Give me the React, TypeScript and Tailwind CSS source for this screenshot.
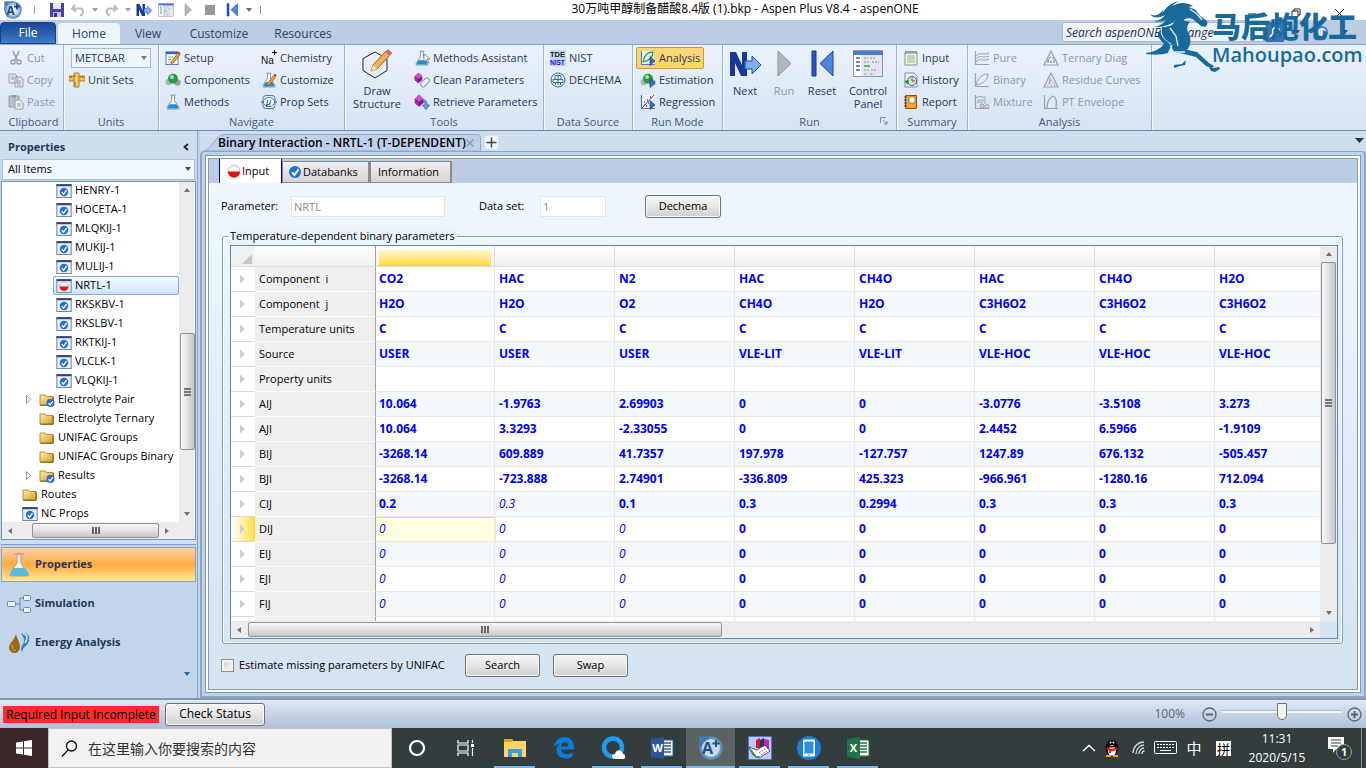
import React from 'react';

interface GridRow {
  label: string;
  cells: string[];
  active?: boolean;
}

// a leading ~ marks a default value, shown in italics
const rows: GridRow[] = [
  { label: 'Component  i', cells: ['CO2', 'HAC', 'N2', 'HAC', 'CH4O', 'HAC', 'CH4O', 'H2O'] },
  { label: 'Component  j', cells: ['H2O', 'H2O', 'O2', 'CH4O', 'H2O', 'C3H6O2', 'C3H6O2', 'C3H6O2'] },
  { label: 'Temperature units', cells: ['C', 'C', 'C', 'C', 'C', 'C', 'C', 'C'] },
  { label: 'Source', cells: ['USER', 'USER', 'USER', 'VLE-LIT', 'VLE-LIT', 'VLE-HOC', 'VLE-HOC', 'VLE-HOC'] },
  { label: 'Property units', cells: ['', '', '', '', '', '', '', ''] },
  { label: 'AIJ', cells: ['10.064', '-1.9763', '2.69903', '0', '0', '-3.0776', '-3.5108', '3.273'] },
  { label: 'AJI', cells: ['10.064', '3.3293', '-2.33055', '0', '0', '2.4452', '6.5966', '-1.9109'] },
  { label: 'BIJ', cells: ['-3268.14', '609.889', '41.7357', '197.978', '-127.757', '1247.89', '676.132', '-505.457'] },
  { label: 'BJI', cells: ['-3268.14', '-723.888', '2.74901', '-336.809', '425.323', '-966.961', '-1280.16', '712.094'] },
  { label: 'CIJ', cells: ['0.2', '~0.3', '0.1', '0.3', '0.2994', '0.3', '0.3', '0.3'] },
  { label: 'DIJ', cells: ['~0', '~0', '~0', '0', '0', '0', '0', '0'], active: true },
  { label: 'EIJ', cells: ['~0', '~0', '~0', '0', '0', '0', '0', '0'] },
  { label: 'EJI', cells: ['~0', '~0', '~0', '0', '0', '0', '0', '0'] },
  { label: 'FIJ', cells: ['~0', '~0', '~0', '0', '0', '0', '0', '0'] },
  { label: '', cells: ['', '', '', '', '', '', '', ''] },
];

interface IconProps {
  size?: number;
  children: React.ReactNode;
}

const Icon: React.FC<IconProps> = ({ size = 16, children }) => (
  <svg width={size} height={size} viewBox="0 0 16 16" className="shrink-0" aria-hidden="true">
    {children}
  </svg>
);

const Play = () => <path d="M10 6.500v9l5-4.500z" fill="#2e6fd0" stroke="#1c3f8c" strokeWidth=".7" />;
const Axes = ({ color = '#5b78b8' }: { color?: string }) => (
  <path d="M1.500 1v13.500H15" fill="none" stroke={color} strokeWidth="1.2" />
);
const Pencil = () => (
  <>
    <path d="M6.500 11.500 13 3l2 1.600-6.500 8.200-2.600 1z" fill="#f6a531" stroke="#8b4b12" strokeWidth=".7" />
    <path d="m12.600 3.200 1.200-1.600 2 1.600-1.200 1.600z" fill="#d8463b" />
  </>
);
const Flask = () => (
  <>
    <path d="M5.500 1.200h5M6.500 1.500v5L2 13.600c-.4.8 0 1.400.8 1.400h10.400c.8 0 1.200-.6.8-1.400L9.500 6.500v-5" fill="#eef6fc" stroke="#7c8ca0" strokeWidth=".9" />
    <path d="M4.600 10.200h6.800l2 3.400c.2.500 0 .9-.5.9H3.100c-.5 0-.7-.4-.5-.9z" fill="#1f8fd6" />
  </>
);
const Spheres = () => (
  <>
    <circle cx="3.800" cy="10" r="3.300" fill="#aeb3b9" />
    <circle cx="12.400" cy="10.500" r="3.300" fill="#9aa1a8" />
    <circle cx="8" cy="6.800" r="5" fill="#2a9a42" />
    <circle cx="7" cy="5" r="2" fill="#a6e6ae" />
  </>
);
const Cube = () => (
  <>
    <path d="M6 1 1 5.500v5l5 4.500 5-4.500v-5z" fill="#8d1487" />
    <path d="M6 1 1 5.500 6 9l5-3.500z" fill="#cf52c8" />
    <path d="M6 9v6l-5-4.500v-5z" fill="#a81fa1" />
  </>
);

const CheckDot = ({ cx = 8, cy = 8, r = 6 }: { cx?: number; cy?: number; r?: number }) => (
  <>
    <circle cx={cx} cy={cy} r={r} fill="#1f6fd6" />
    <path
      d={`M${cx - r * 0.5} ${cy + r * 0.05}l${r * 0.4} ${r * 0.45} ${r * 0.7} ${-r * 0.95}`}
      fill="none"
      stroke="#fff"
      strokeWidth={r * 0.33}
    />
  </>
);
const HalfRed = ({ r = 6 }: { r?: number }) => (
  <>
    <circle cx="8" cy="8.500" r={r} fill="#fff" stroke="#d98080" strokeWidth=".7" />
    <path d={`M${8 - r} 8.500a${r} ${r} 0 0 0 ${2 * r} 0z`} fill="#dd1111" />
  </>
);

const FormIcon = ({ red = false }: { red?: boolean }) => (
  <Icon>
    <rect x=".8" y="1.500" width="14.400" height="13" fill="#e9eefb" stroke="#7184b8" />
    <path d="M.5 2.200h15" stroke="#34457e" strokeWidth="2" />
    {red ? <HalfRed r={4.4} /> : <CheckDot cy={9} r={4.2} />}
  </Icon>
);

const FolderIcon = ({ checked = false }: { checked?: boolean }) => (
  <Icon>
    <defs>
      <linearGradient id="folder" x1="0" y1="0" x2="1" y2="1">
        <stop offset="0" stopColor="#fff0ae" />
        <stop offset="1" stopColor="#d99a1c" />
      </linearGradient>
    </defs>
    <path d="M1 3h5l1.500 1.500H14V13H1z" fill="url(#folder)" stroke="#b08325" strokeWidth=".9" />
    <path d="M14.200 5v8.300H1.500" fill="none" stroke="#6b4c14" strokeWidth=".9" />
    {checked && <CheckDot cx={11.5} cy={11} r={4} />}
  </Icon>
);

const AspenLogo = ({ size = 16 }: { size?: number }) => (
  <Icon size={size}>
    <defs>
      <radialGradient id="aspen">
        <stop offset="0" stopColor="#ffffff" />
        <stop offset=".55" stopColor="#c7d9ec" />
        <stop offset="1" stopColor="#3f7fbd" />
      </radialGradient>
    </defs>
    <path d="M.3.300H8v8H.300z" fill="#3c7cb8" />
    <circle cx="8" cy="8" r="7.800" fill="url(#aspen)" />
    <text x="2.200" y="12" fontSize="10.500" fontWeight="700" fontFamily="Open Sans, sans-serif" fill="#1c4478">A</text>
    <path d="M11.500 2.500v5M9 5h5" stroke="#1c4478" strokeWidth="1.600" />
  </Icon>
);

const NextIcon = ({ size = 16 }: { size?: number }) => (
  <svg width={size} height={size} viewBox="0 0 32 32" className="shrink-0" aria-hidden="true">
    <path d="M1 4h6l6 13V4h5v24h-6L6 15v13H1z" fill="#17389a" />
    <path d="M16 13h7V8l9 9-9 9v-5h-7z" fill="#7fb0ee" stroke="#234fa6" />
  </svg>
);
const RunIcon = ({ size = 16 }: { size?: number }) => (
  <svg width={size} height={size} viewBox="0 0 32 32" className="shrink-0" aria-hidden="true">
    <path d="M10 3v25l13-12.500z" fill="#b3b6ba" stroke="#8d9299" />
  </svg>
);
const ResetIcon = ({ size = 16 }: { size?: number }) => (
  <svg width={size} height={size} viewBox="0 0 32 32" className="shrink-0" aria-hidden="true">
    <path d="M6 3h4v25H6z" fill="#2a56c4" stroke="#17348c" />
    <path d="M27 3v25L14 15.500z" fill="#4b86e0" stroke="#1c459f" />
  </svg>
);
const PanelIcon = ({ size = 16 }: { size?: number }) => (
  <svg width={size} height={size} viewBox="0 0 32 32" className="shrink-0" aria-hidden="true">
    <rect x="1.500" y="2.500" width="29" height="26" fill="#e4e8ee" stroke="#8995a8" />
    <path d="M1 5h30" stroke="#4a7ad0" strokeWidth="4" />
    <path d="M2 7h7v21H2z" fill="#fff" />
    <path d="M4 10h4M4 14h4M4 18h4M4 22h4" stroke="#3658a8" strokeWidth="1.400" />
    <path d="M12 10h4m2 0h5M12 14h6m2 0h7M12 22h5m2 0h5M12 26h4m2 0h4" stroke="#7d8ca8" strokeDasharray="2 1" />
    <path d="M12 18h6" stroke="#3a9a48" strokeWidth="1.400" />
  </svg>
);

const Caret = ({ className = '' }: { className?: string }) => (
  <svg width="6" height="4" viewBox="0 0 6 4" className={className} aria-hidden="true">
    <path d="M0 0h6L3 4z" fill="currentColor" />
  </svg>
);

const Arrow = ({ dir }: { dir: 'up' | 'down' | 'left' | 'right' }) => {
  const d = { up: 'M1 6h6L4 2z', down: 'M1 2h6L4 6z', left: 'M6 1v6L2 4z', right: 'M2 1v6l4-3z' }[dir];
  return (
    <svg width="8" height="8" viewBox="0 0 8 8" aria-hidden="true">
      <path d={d} fill="#707070" />
    </svg>
  );
};

const QuickAccess = () => (
  <div className="flex items-center w-72 shrink-0 pl-1 text-[#6b6b6b]">
    <AspenLogo size={18} />
    <span className="w-px h-2 bg-gray-400 mx-3" />
    <button aria-label="Save" className="ml-[2px]">
      <Icon>
        <path d="M1 1h14v14H1z" fill="#4a3fb0" />
        <path d="M4 1h8v6H4z" fill="#e8e8f4" />
        <path d="M4 10h8v5H4z" fill="#c7c7dc" />
        <path d="M5 11h3v4H5z" fill="#333080" />
      </Icon>
    </button>
    <button aria-label="Undo" className="flex items-center gap-[6px] ml-[5px]">
      <Icon><path d="M5 3 2 6.500l4 3M3 6.500h7c4 0 4 6 0 7" fill="none" stroke="#bbb" strokeWidth="2" /></Icon>
      <Caret className="text-gray-400" />
    </button>
    <button aria-label="Redo" className="flex items-center gap-[6px] ml-[5px]">
      <Icon><path d="m11 3 3 3.500-4 3M13 6.500H7c-5 0-4 6 0 7" fill="none" stroke="#bbb" strokeWidth="2" /></Icon>
      <Caret className="text-gray-400" />
    </button>
    <button aria-label="Next" className="ml-[5px]"><NextIcon /></button>
    <button aria-label="Control Panel" className="ml-[6px]"><PanelIcon /></button>
    <button aria-label="Run" className="ml-[6px]"><RunIcon /></button>
    <button aria-label="Stop" className="ml-[6px]"><Icon><path d="M3 3h10v10H3z" fill="#9a9a9a" /></Icon></button>
    <button aria-label="Reset" className="ml-[6px]"><ResetIcon /></button>
    <Caret className="ml-[6px] shrink-0" />
    <span className="w-px h-2 bg-gray-400 ml-2 shrink-0" />
  </div>
);

interface CommandProps {
  icon: React.ReactNode;
  label: string;
  disabled?: boolean;
  active?: boolean;
}

const Command: React.FC<CommandProps> = ({ icon, label, disabled, active }) => (
  <button
    className={`flex items-center gap-[3px] h-[22px] px-[3px] whitespace-nowrap border rounded-xs ${
      active ? 'border-[#c89a3c] bg-linear-to-b from-[#fbd77e] to-[#ffd65a]' : 'border-transparent'
    } ${disabled ? 'text-[#8c98a8]' : 'text-[#1e395b]'}`}
  >
    {icon}
    {label}
  </button>
);

const BigCommand: React.FC<CommandProps> = ({ icon, label, disabled }) => (
  <button className={`flex flex-col items-center pt-px leading-[13px] ${disabled ? 'text-[#8c98a8]' : 'text-[#1e395b]'}`}>
    {icon}
    <span className="pt-1">{label}</span>
  </button>
);

interface GroupProps {
  title: string;
  className: string;
  launcher?: boolean;
  children: React.ReactNode;
}

const Group: React.FC<GroupProps> = ({ title, className, launcher, children }) => (
  <section className={`flex flex-col shrink-0 border-r border-[#9fb6d3] shadow-[1px_0_0_#f5f9fe] ${className}`}>
    <div className="flex h-[68px] pt-[2px]">{children}</div>
    <h2 className="relative text-center leading-[17px] text-[#3e5a80]">
      {title}
      {launcher && (
        <svg className="absolute right-2 top-1" width="8" height="8" viewBox="0 0 8 8" aria-hidden="true">
          <path d="M.5 6V.500H6M3 3l4 4M7 4v3H4" fill="none" stroke="#7a8ca8" />
        </svg>
      )}
    </h2>
  </section>
);

const gray = '#9aa0a8';

const Ribbon = () => (
  <div className="flex h-[87px] shrink-0 overflow-hidden border-t border-b border-t-[#8ba4c8] border-b-[#6b8ab2] bg-linear-to-b from-[#eaf2fb] to-[#d7e4f2]">
    <Group title="Clipboard" className="w-16 pl-1">
      <div>
        <Command disabled label="Cut" icon={<Icon><path d="m5 1 4 9M11 1 7 10" stroke={gray} strokeWidth="1.600" /><circle cx="5" cy="12" r="2" fill="none" stroke={gray} strokeWidth="1.500" /><circle cx="11" cy="12" r="2" fill="none" stroke={gray} strokeWidth="1.500" /></Icon>} />
        <Command disabled label="Copy" icon={<Icon><path d="M1 2h6l2 2v7H1zM7 5h6l2 2v8H7z" fill="#e2e6eb" stroke={gray} /><path d="M3 5h3M3 7h3m3 2h4m-4 2h4m-4 2h4" stroke={gray} /></Icon>} />
        <Command disabled label="Paste" icon={<Icon><path d="M1 2h10v11H1z" fill="#bcc1c7" stroke={gray} /><path d="M4 1h4v3H4z" fill={gray} /><path d="M7 6h5l3 3v6H7z" fill="#eceff2" stroke={gray} /><path d="M9 10h4m-4 2h4" stroke={gray} /></Icon>} />
      </div>
    </Group>
    <Group title="Units" className="w-[95px]">
      <div className="pl-px">
        <div className="relative ml-[6px] mt-px mb-px">
          <select aria-label="Unit set" className="appearance-none block w-20 h-5 pl-[3px] border border-[#a3bbdb] bg-[#edf4fc] text-[#1e395b]">
            <option>METCBAR</option>
          </select>
          <Caret className="absolute right-1 top-2 text-[#777] pointer-events-none" />
        </div>
        <Command label="Unit Sets" icon={<Icon><path d="M0 4h16v5H0z" fill="#f3c34d" stroke="#9a6b14" strokeWidth=".8" /><path d="M5 1h5v14H5z" fill="#f7cf63" stroke="#9a6b14" strokeWidth=".8" /><path d="M2 4v2m10-2v2m2-2v2M5 11h2m-2-7h2m-2 9h2" stroke="#7d5410" strokeWidth=".8" /></Icon>} />
      </div>
    </Group>
    <Group title="Navigate" className="w-[186px]">
      <div className="w-24 pl-[2px]">
        <Command label="Setup" icon={<Icon><rect x="1" y="2" width="12" height="12.500" fill="#fff" stroke="#5b7cae" /><path d="M1 3h12" stroke="#3b66b0" strokeWidth="2.500" /><path d="M3 7h5M3 9.500h3" stroke="#9ab" /><Pencil /></Icon>} />
        <Command label="Components" icon={<Icon><Spheres /></Icon>} />
        <Command label="Methods" icon={<Icon><Flask /></Icon>} />
      </div>
      <div className="pl-[2px]">
        <Command label="Chemistry" icon={<Icon><text x="0" y="14" fontSize="10" fontFamily="Liberation Sans, sans-serif" fill="#111">Na</text><path d="M13.500 0v5M11 2.500h5" stroke="#111" /></Icon>} />
        <Command label="Customize" icon={<Icon><Flask /><Pencil /></Icon>} />
        <Command label="Prop Sets" icon={<Icon><rect x="2" y="1.500" width="12" height="13" rx="3" fill="#e3efff" stroke="#4a76c0" /><path d="M0 8h3m10 0h3" stroke="#4a76c0" strokeWidth="1.500" /><ellipse cx="8" cy="8" rx="5.500" ry="4.500" fill="#fff" stroke="#4a76c0" /><text x="5" y="11" fontSize="9" fontStyle="italic" fontFamily="Open Sans, sans-serif" fill="#111">μ</text></Icon>} />
      </div>
    </Group>
    <Group title="Tools" className="w-[199px]">
      <div className="w-16 flex justify-center">
        <BigCommand label="Draw Structure" icon={
          <svg width="32" height="32" viewBox="0 0 32 32" aria-hidden="true">
            <path d="m14 4 12 6.500v12L14 30 2 22.500v-12z" fill="none" stroke="#222" />
            <path d="m10 23 2-6L25 3l4 4-13 14z" fill="#f3b05a" stroke="#a5621d" />
            <path d="m24 4 3-3 4.500 4-3 3z" fill="#d46a6a" />
            <path d="m10 23 2-6 4 4z" fill="#fbe3c0" />
          </svg>
        } />
      </div>
      <div className="pl-px">
        <Command label="Methods Assistant" icon={<Icon><Flask /><path d="M10 4v8l2-2 2 3 1-1-2-3h3z" fill="#fff" stroke="#666" strokeWidth=".7" /></Icon>} />
        <Command label="Clean Parameters" icon={<Icon><g transform="scale(.75)"><Cube /></g><rect x="6" y="8" width="10" height="5" rx="2.500" transform="rotate(-45 11 10.500)" fill="#eef1f7" stroke="#8791a8" /></Icon>} />
        <Command label="Retrieve Parameters" icon={<Icon><g transform="scale(.85)"><Cube /></g><path d="M9 6c4 0 4 2 4 5h2.500L12 15.500 8.500 11H11c0-2 0-3-2-3z" fill="#6fa0ea" stroke="#2450a8" strokeWidth=".7" /></Icon>} />
      </div>
    </Group>
    <Group title="Data Source" className="w-[89px]">
      <div className="pl-[2px]">
        <Command label="NIST" icon={<Icon><path d="M0 0h16v16H0z" fill="#c5d6f2" /><text x="0" y="7" fontSize="7.500" fontWeight="700" fontFamily="Liberation Sans, sans-serif" fill="#222">TDE</text><text x="0" y="15" fontSize="6.500" fontWeight="700" fontFamily="Liberation Sans, sans-serif" fill="#1414d8">NIST</text></Icon>} />
        <Command label="DECHEMA" icon={<Icon><circle cx="8" cy="8" r="7" fill="#e6f1f8" stroke="#356f96" /><path d="M5 3.500h6v4H5zM3 7.500h10v3H3zM8 3v10M5.500 10.500v2.500m5-2.500v2.500" fill="none" stroke="#356f96" /></Icon>} />
      </div>
    </Group>
    <Group title="Run Mode" className="w-[90px]">
      <div className="pl-[3px]">
        <Command active label="Analysis" icon={<Icon><path d="M1 1h13v14H1z" fill="#f4f7ff" /><Axes /><path d="M3 12C5 4 8 2 13 2c0 5-4 9-10 10" fill="none" stroke="#30a848" strokeWidth="1.400" /><Play /></Icon>} />
        <Command label="Estimation" icon={<Icon><Spheres /><Play /></Icon>} />
        <Command label="Regression" icon={<Icon><path d="M1 1h13v14H1z" fill="#f4f7ff" /><Axes /><path d="M2 14 14 1" stroke="#2244aa" /><path d="M4 8h1m2-2h1m2-3h1M6 12h1m1-3h1" stroke="#d02020" strokeWidth="1.500" /><Play /></Icon>} />
      </div>
    </Group>
    <Group title="Run" className="w-[174px]" launcher>
      <div className="grid grid-cols-[44px_34px_42px_50px] w-full">
        <BigCommand label="Next" icon={<NextIcon size={32} />} />
        <BigCommand disabled label="Run" icon={<RunIcon size={32} />} />
        <BigCommand label="Reset" icon={<ResetIcon size={32} />} />
        <BigCommand label="Control Panel" icon={<PanelIcon size={32} />} />
      </div>
    </Group>
    <Group title="Summary" className="w-[71px]">
      <div className="pl-[2px]">
        <Command label="Input" icon={<Icon><path d="M2 2h12v13H2z" fill="#eef3e8" stroke="#8a9488" /><path d="M3 1v3m2-3v3m2-3v3m2-3v3m2-3v3m2-3v3" stroke="#666" strokeWidth=".8" /><path d="M4 6h8M4 8h8m-8 2h8m-8 2h8" stroke="#8fb88a" /></Icon>} />
        <Command label="History" icon={<Icon><path d="M2 1h9l3 3v11H2z" fill="#f1f5fb" stroke="#7a8ba8" /><circle cx="9" cy="9" r="4.500" fill="#d7e7d7" stroke="#657" /><path d="M9 6v3h3" fill="none" stroke="#c02020" /><path d="m1 9 5-1-1 5z" fill="#1f9a38" /></Icon>} />
        <Command label="Report" icon={<Icon><path d="M2.500 1.500h11v13h-11z" fill="#f0a53c" stroke="#8a5415" /><path d="M6 3h6v6H6z" fill="#fff8e0" stroke="#8a5415" strokeWidth=".7" /><path d="M1 3h3M1 6h3M1 9h3m-3 3h3" stroke="#444" /></Icon>} />
      </div>
    </Group>
    <Group title="Analysis" className="w-[184px]">
      <div className="w-[71px] pl-[2px]">
        <Command disabled label="Pure" icon={<Icon><Axes color={gray} /><path d="M2 6c4-5 7 0 13-3M2 9c4-5 7 0 13-3M2 12c4-5 7 0 13-3" fill="none" stroke={gray} /></Icon>} />
        <Command disabled label="Binary" icon={<Icon><Axes color={gray} /><path d="M2 13C4 6 8 2 14 2c0 6-5 10-12 11" fill="none" stroke={gray} /></Icon>} />
        <Command disabled label="Mixture" icon={<Icon><Axes color={gray} /><path d="M2 4c4-3 6 0 9-1v7M3 7c3-2 5 0 7-1M3 9c3-2 5 0 6-1" fill="none" stroke={gray} /><circle cx="8" cy="12" r="2" fill="#ddd" stroke={gray} /><circle cx="13" cy="12.500" r="2" fill="#ddd" stroke={gray} /></Icon>} />
      </div>
      <div>
        <Command disabled label="Ternary Diag" icon={<Icon><path d="m8 1 7 14H1z" fill="none" stroke={gray} strokeWidth="1.200" /><path d="M5 11c0-5 6-5 6 0M4 12h8" fill="none" stroke="#777" strokeDasharray="2 1" /></Icon>} />
        <Command disabled label="Residue Curves" icon={<Icon><path d="m8 1 7 14H1z" fill="none" stroke={gray} strokeWidth="1.200" /><path d="M8 5c-2 4 3 4 4 9M7 7c-1 4 0 5 2 7M4 13c2-1 3-3 3-5" fill="none" stroke={gray} /></Icon>} />
        <Command disabled label="PT Envelope" icon={<Icon><Axes color={gray} /><path d="M4 14c0-6 2-10 6-12 3 1 4 5 3 12" fill="none" stroke={gray} strokeWidth="1.300" /></Icon>} />
      </div>
    </Group>
  </div>
);

const Watermark = () => (
  <div className="absolute right-0 top-0 flex w-[220px] text-[#186a9b] pointer-events-none">
    <svg width="80" height="73" viewBox="0 0 80 73" fill="currentColor" className="shrink-0 -mr-[14px]" aria-hidden="true">
      <path d="M4 14c5 3 9 1 13-4 0 2-1 4-2 5C19 9 24 2 34 1c-4 1-6 3-8 5 7-4 15-4 21 0l-5 1c6 1 10 4 12 9l7 5c1 2 0 5-2 6l-4-1-7-6c-3-2-6-2-9-1-4 4-9 7-16 8 3-2 5-4 6-6-5 4-12 6-20 6 6-2 9-4 11-7-4 2-8 2-12 1 5 0 9-3 11-6-5 3-12 4-15-1z" />
      <path d="M16 27c7 0 14-2 20-7l8 2c-4 4-3 8-1 13 3 6 1 11-2 15l-12-4-9-6c-4-4-5-8-4-13z" />
      <path d="M15 29c-1 5 1 9 8 14l2 5-3 5c-7 2-14 2-22 1v-1c8-1 14-4 18-9l-5-6c-2-3-1-6 2-9z" />
      <path d="m24 44 9 1 9 5 9 2 12 11 5 3-2 2-6-2-10-9-12-3-10-2zM28 65l8-1 4-4-1 5-5 1-6 2zM62 65l5 3 6-1 1 2-5 3-4-1z" />
      <path d="m24 28 6 8 2 10m-6-1-3 7 16 0M44 9l7 5 5 6m-5-8 2 1" fill="none" stroke="#dfeaf6" strokeWidth="1.300" />
    </svg>
    <div className="pt-[7px] whitespace-nowrap">
      <div className="font-['Noto_Sans_CJK_SC',sans-serif] font-black text-[29px] leading-[36px]">马后炮化工</div>
      <div className="font-['Open_Sans',sans-serif] font-semibold text-[20px] leading-[24px]">Mahoupao.com</div>
    </div>
  </div>
);

const Header = () => (
  <header className="relative shrink-0">
    <div className="flex h-5 bg-white">
      <QuickAccess />
      <h1 className="flex-1 text-center text-black text-xs leading-[18px] pr-[164px]">
        30万吨甲醇制备醋酸8.4版 (1).bkp - Aspen Plus V8.4 - aspenONE
      </h1>
    </div>
    <nav className="flex items-end h-6 bg-[#bbcce4] text-xs text-[#2b4568]">
      <button className="w-14 h-[22px] mr-[2px] rounded-t-sm border border-[#1d4283] bg-linear-to-b from-[#1c4a96] via-[#2a5fae] to-[#3f7cc9] text-white">File</button>
      <button className="w-[62px] h-[21px] rounded-t-sm bg-[#eff5fc]">Home</button>
      <button className="w-14 h-[21px]">View</button>
      <button className="w-[86px] h-[21px]">Customize</button>
      <button className="w-[82px] h-[21px]">Resources</button>
      <div className="flex items-center ml-auto self-start pt-[2px] pr-3">
        <input aria-label="Search" defaultValue="Search aspenONE Exchange" className="w-[204px] h-5 px-[3px] border border-[#a8b8cc] bg-[#eff5fc] text-xs italic text-[#1e2f55]" />
        <button aria-label="Go" className="w-[18px] h-5 bg-[#3c72b8] flex items-center justify-center">
          <svg width="12" height="12" viewBox="0 0 12 12" aria-hidden="true"><circle cx="7" cy="5" r="3.500" fill="none" stroke="#fff" strokeWidth="1.500" /><path d="M4 8 1 11" stroke="#fff" strokeWidth="2" /></svg>
        </button>
        <Caret className="ml-[10px] mr-4 text-[#445]" />
        <button aria-label="Help" className="w-3 h-3 mr-[14px] rounded-full border-2 border-[#4a7fd0] bg-[#d8e6f8]" />
        <button aria-label="Collapse" className="w-3"><Caret className="text-[#445]" /></button>
      </div>
    </nav>
    <Ribbon />
    <svg className="absolute right-4 top-2" width="104" height="12" viewBox="0 0 104 12" aria-hidden="true">
      <path d="M2 6h8M46 3h6v6h-6zM48 3V1h6v6h-2M89 1l9 9M98 1l-9 9" fill="none" stroke="#222" />
    </svg>
    <Watermark />
  </header>
);

interface TreeItemProps {
  label: string;
  icon: React.ReactNode;
  indent: string;
  expander?: boolean;
  selected?: boolean;
}

const TreeItem: React.FC<TreeItemProps> = ({ label, icon, indent, expander, selected }) => (
  <li className={`flex ${indent}`}>
    {expander && (
      <svg width="16" height="19" viewBox="0 0 16 19" aria-hidden="true">
        <path d="M6.500 5.500v8l4-4z" fill="#fff" stroke="#999" />
      </svg>
    )}
    <button
      className={`flex flex-1 items-center gap-[3px] h-[19px] pl-[2px] border rounded-xs whitespace-nowrap ${
        selected ? 'border-[#84acdd] bg-linear-to-b from-[#f2f8ff] to-[#cfe3fb]' : 'border-transparent'
      }`}
    >
      {icon}
      {label}
    </button>
  </li>
);

const forms = ['HENRY-1', 'HOCETA-1', 'MLQKIJ-1', 'MUKIJ-1', 'MULIJ-1', 'NRTL-1', 'RKSKBV-1', 'RKSLBV-1', 'RKTKIJ-1', 'VLCLK-1', 'VLQKIJ-1'];

const thumbV = 'flex flex-col items-center justify-center gap-px rounded-xs border border-[#8f9399] bg-linear-to-r from-[#f7f7f7] via-[#e2e2e4] to-[#c4c5c8]';
const thumbH = 'flex items-center justify-center gap-px rounded-xs border border-[#8f9399] bg-linear-to-b from-[#f7f7f7] via-[#e2e2e4] to-[#c4c5c8]';

const GripV = () => (
  <>
    <span className="w-[7px] h-[2px] bg-[#777]" />
    <span className="w-[7px] h-[2px] bg-[#777]" />
    <span className="w-[7px] h-[2px] bg-[#777]" />
  </>
);
const GripH = () => (
  <>
    <span className="w-[2px] h-[7px] bg-[#666]" />
    <span className="w-[2px] h-[7px] bg-[#666]" />
    <span className="w-[2px] h-[7px] bg-[#666]" />
  </>
);

const Sidebar = () => (
  <aside className="flex flex-col w-[198px] shrink-0 px-px border-r border-[#8fa5c2] bg-[#c2d5ea]">
    <div className="flex items-center justify-between h-7 pl-2 pr-2 pt-1 -mx-px bg-[#d0ddee]">
      <h2 className="font-bold text-[#1e395b]">Properties</h2>
      <svg width="6" height="8" viewBox="0 0 6 8" aria-hidden="true"><path d="M5 1 1.500 4 5 7" fill="none" stroke="#222" strokeWidth="1.800" /></svg>
    </div>
    <div className="relative mx-px mb-px">
      <select aria-label="Filter" className="appearance-none block w-full h-[21px] pl-[5px] border border-[#a9c4e2] bg-[#f1f7fe]">
        <option>All Items</option>
      </select>
      <Caret className="absolute right-1 top-2 text-[#445] pointer-events-none" />
    </div>
    <div className="flex flex-col flex-1 min-h-0 border border-[#7e96b4] bg-white">
      <div className="flex flex-1 min-h-0">
        <ul className="flex-1 min-w-0 overflow-hidden -mt-px">
          {forms.map((name) => (
            <TreeItem key={name} label={name} indent="pl-[51px]" icon={<FormIcon red={name === 'NRTL-1'} />} selected={name === 'NRTL-1'} />
          ))}
          <TreeItem label="Electrolyte Pair" indent="pl-[18px]" expander icon={<FolderIcon checked />} />
          <TreeItem label="Electrolyte Ternary" indent="pl-[34px]" icon={<FolderIcon />} />
          <TreeItem label="UNIFAC Groups" indent="pl-[34px]" icon={<FolderIcon />} />
          <TreeItem label="UNIFAC Groups Binary" indent="pl-[34px]" icon={<FolderIcon />} />
          <TreeItem label="Results" indent="pl-[18px]" expander icon={<FolderIcon checked />} />
          <TreeItem label="Routes" indent="pl-[17px]" icon={<FolderIcon />} />
          <TreeItem label="NC Props" indent="pl-[17px]" icon={<FormIcon />} />
        </ul>
        <div className="flex flex-col items-center w-4 py-1 bg-[#ececec]">
          <Arrow dir="up" />
          <div className={`w-[15px] h-[117px] mt-auto ${thumbV}`}><GripV /></div>
          <div className="h-[60px] shrink-0" />
          <Arrow dir="down" />
        </div>
      </div>
      <div className="flex items-center h-[17px] shrink-0 pl-1 pr-6 bg-[#ececec]">
        <Arrow dir="left" />
        <div className={`w-[129px] h-[15px] ml-[18px] mr-1 ${thumbH}`}><GripH /></div>
        <Arrow dir="right" />
      </div>
    </div>
    <div className="h-[5px] shrink-0 border-b border-[#7e9cc4] bg-[#cfdff2]" />
    <nav className="flex flex-col gap-1 h-[153px] pt-[2px] shrink-0 font-bold text-[#1e395b]">
      <button className="flex items-center gap-1 h-[35px] pl-[3px] border border-[#8ba3c2] bg-linear-to-b from-[#fdd0a0] via-[#ffab3f] via-50% to-[#fee794]">
        <svg width="26" height="26" viewBox="0 0 26 26" aria-hidden="true">
          <path d="M9 2h10M12 2v9L5 22c-1 2 0 2 1 2h15c2 0 2-1 1-2l-6-11V2z" fill="#f6efe4" stroke="#a88" strokeWidth=".7" />
          <path d="M8 16h12l4 6c0 2-1 2-2 2H6c-2 0-2-1-1-2z" fill="#56bfe0" />
        </svg>
        Properties
      </button>
      <button className="flex items-center gap-1 h-[35px] pl-1">
        <svg width="26" height="20" viewBox="0 0 26 20" fill="#eff5fd" stroke="#6786b8" aria-hidden="true">
          <path d="M10 10h5M18 4h-3v12h3" fill="none" />
          <rect x="2.500" y="7.500" width="8" height="5" rx="1" /><rect x="18.500" y="1.500" width="7" height="5" rx="1" /><rect x="18.500" y="13.500" width="7" height="5" rx="1" />
        </svg>
        Simulation
      </button>
      <button className="flex items-center gap-1 h-[35px] pl-1">
        <svg width="26" height="22" viewBox="0 0 26 22" aria-hidden="true">
          <path d="M11 2c1 5 4 8 4 13 0 4-3 6-5.500 6S4 19 4 15.500 9 8 11 2z" fill="#9a6a1c" />
          <path d="M7 13c0 3 1 5 4 6" stroke="#d7a85a" fill="none" />
          <path d="M16 2c8-3 10 4 7 9-2 4-5 4-6 9-3-5 2-7 2-11 0-3-1-5-3-7z" fill="#3a7fc0" />
          <path d="M18 2c5 0 5 4 2 9" stroke="#d5e8fa" fill="none" strokeWidth="1.500" />
        </svg>
        Energy Analysis
      </button>
      <Caret className="ml-auto mr-[6px] mt-2 text-[#2f5fa8]" />
    </nav>
  </aside>
);

const PushButton = ({ className, children }: { className: string; children: React.ReactNode }) => (
  <button className={`h-[23px] rounded-[3px] border border-[#707070] bg-linear-to-b from-[#f4f4f4] via-[#e6e6e6] to-[#cfcfcf] shadow-[inset_0_0_0_1px_#fafafa] ${className}`}>
    {children}
  </button>
);

const ParameterTable = () => (
  <table className="table-fixed w-[1104px] border-separate border-spacing-0">
    <colgroup>
      <col className="w-6" />
      <col className="w-[121px]" />
      {rows[0].cells.map((_, i) => <col key={i} className={i === 0 ? 'w-[119px]' : 'w-[120px]'} />)}
    </colgroup>
    <thead>
      <tr className="h-[21px]">
        <th className="p-0 bg-[#f0f0f0] border-b border-[#dcdcdc]">
          <svg width="24" height="20" viewBox="0 0 24 20" aria-hidden="true"><path d="M21 8v10H11z" fill="#c6c6c6" /></svg>
        </th>
        <th className="p-0 border-b border-r border-b-[#dcdcdc] border-r-[#a0a0a0] bg-linear-to-b from-white to-[#f0f0f0]" />
        {rows[0].cells.map((_, i) => (
          <th key={i} className="p-0 border-b border-r border-[#dcdcdc] bg-linear-to-b from-white to-[#f0f0f0]">
            {i === 0 && <div className="h-4 mx-[3px] mt-[3px] bg-linear-to-b from-[#fff6cc] to-[#ffd91a]" />}
          </th>
        ))}
      </tr>
    </thead>
    <tbody>
      {rows.map((row, r) => (
        <tr key={r} className={`h-[25px] ${r % 2 ? 'bg-[#f3f8fd]' : 'bg-white'}`}>
          <td className={`p-0 border-b border-[#dadada] ${row.active ? 'bg-linear-to-r from-white to-[#ffdd1c]' : 'bg-white'}`}>
            <svg width="24" height="12" viewBox="0 0 24 12" aria-hidden="true"><path d="M9 1.500v9l5-4.500z" fill="#cfcfcf" /></svg>
          </td>
          <th scope="row" className="p-0 pl-1 text-left font-normal whitespace-pre border-b border-r border-b-[#fafafa] border-r-[#a0a0a0] bg-[#efefef]">
            {row.label}
          </th>
          {row.cells.map((cell, i) => {
            const italic = cell.startsWith('~');
            return (
              <td
                key={i}
                className={`p-0 border-b border-r border-[#e6e9ec] text-xs text-[#0000f5] ${i === 0 ? 'pl-[3px]' : 'pl-1'} ${italic ? 'italic' : 'font-bold'} ${
                  row.active && i === 0 ? 'bg-[#ffffe0] shadow-[inset_0_1px_0_#f5dc60,1px_0_0_#f9eb9a]' : ''
                }`}
              >
                {cell.replace('~', '')}
              </td>
            );
          })}
        </tr>
      ))}
    </tbody>
  </table>
);

const Editor = () => (
  <main className="flex flex-col flex-1 min-w-0 ml-[2px] bg-[#d0ddee]">
    <div className="flex items-end h-5 shrink-0 pl-1">
      <div className="relative h-[17px] w-[277px] shrink-0">
        <svg className="absolute inset-0" width="277" height="17" viewBox="0 0 277 17" aria-hidden="true">
          <path d="M0 17C8 15 12 .500 20 .500h254q2.500 0 2.500 2.500v14z" fill="#bfd0e8" stroke="#94a9c6" />
        </svg>
        <div className="relative flex items-center justify-between pl-[14px] pr-2 text-xs leading-[17px] font-semibold text-black whitespace-nowrap">
          Binary Interaction - NRTL-1 (T-DEPENDENT)
          <button aria-label="Close tab">
            <svg width="8" height="8" viewBox="0 0 8 8" aria-hidden="true"><path d="m.500.500 7 7m0-7-7 7" stroke="#8b98ac" strokeWidth="1.400" /></svg>
          </button>
        </div>
      </div>
      <button aria-label="New tab" className="flex items-center justify-center w-[13px] h-[13px] ml-1 mb-[2px] rounded-xs bg-[#f1f5fa]">
        <svg width="11" height="11" viewBox="0 0 11 11" aria-hidden="true"><path d="M5.500.500v10m-5-5h10" stroke="#444" strokeWidth="1.500" /></svg>
      </button>
      <button aria-label="Open tabs" className="ml-auto mb-2 mr-[2px]">
        <svg width="9" height="5" viewBox="0 0 9 5" aria-hidden="true"><path d="M0 0h9L4.500 5z" fill="#1e395b" /></svg>
      </button>
    </div>
    <div className="flex flex-col flex-1 min-h-0 p-[3px] border-2 border-t border-[#8fa5c2] rounded-t-sm bg-[#bcd3ec]">
      <div className="flex flex-col flex-1 min-h-0 p-[2px] border border-[#8a97a8] bg-white">
        <div className="flex flex-col flex-1 min-h-0 border border-[#8a97a8] bg-linear-to-b from-[#f1f8ff] to-[#d5e2f0]">
          <div className="flex items-end h-6 shrink-0 pl-[10px] bg-[#bbcce4]">
            <button className="flex items-center w-[63px] h-6 pl-[6px] border-x border-[#000080] bg-white"><Icon><HalfRed /></Icon>Input</button>
            <button className="flex items-center w-[88px] h-[22px] pl-1 border border-r-2 border-[#8a8a8a] bg-linear-to-b from-[#f0f0f0] to-[#d4d4d4]"><Icon><CheckDot /></Icon>Databanks</button>
            <button className="w-[82px] h-[22px] pr-1 border border-r-2 border-[#8a8a8a] bg-linear-to-b from-[#f0f0f0] to-[#d4d4d4]">Information</button>
          </div>
          <div className="flex items-center h-[23px] shrink-0 mt-3 pl-3">
            <label htmlFor="parameter" className="w-[70px]">Parameter:</label>
            <input id="parameter" disabled defaultValue="NRTL" className="w-[154px] h-[21px] px-[2px] border border-[#e2e4e8] bg-white text-[#8a8a8a]" />
            <label htmlFor="dataset" className="w-[61px] ml-[34px]">Data set:</label>
            <input id="dataset" disabled defaultValue="1" className="w-[66px] h-[21px] px-[2px] border border-[#e2e4e8] bg-white text-[#8a8a8a]" />
            <PushButton className="w-[76px] ml-[39px]">Dechema</PushButton>
          </div>
          <fieldset className="flex flex-col flex-1 min-h-0 min-w-0 mt-[10px] ml-[13px] mr-[14px] pl-[7px] pr-1 pb-1 pt-px border border-[#7ba0c4] rounded-[3px] shadow-[inset_0_0_0_1px_#fff]">
            <legend className="-ml-[2px] px-[2px] leading-4 bg-[#ebf4fc]">Temperature-dependent binary parameters</legend>
            <div className="flex flex-col flex-1 h-full min-h-0 border border-[#5c8ab4]">
              <div className="flex flex-1 min-h-0">
                <div className="flex-1 min-w-0 overflow-hidden bg-white">
                  <ParameterTable />
                </div>
                <div className="flex flex-col items-center w-[17px] shrink-0 py-1 bg-[#ececec]">
                  <Arrow dir="up" />
                  <div className={`w-[15px] h-[282px] mt-1 mb-auto ${thumbV}`}><GripV /></div>
                  <Arrow dir="down" />
                </div>
              </div>
              <div className="flex items-center h-[17px] shrink-0 mr-[17px] px-1 bg-[#ececec]">
                <Arrow dir="left" />
                <div className={`w-[474px] h-[15px] ml-[5px] mr-auto ${thumbH}`}><GripH /></div>
                <Arrow dir="right" />
              </div>
            </div>
          </fieldset>
          <div className="flex items-center shrink-0 mt-[10px] mb-3 pl-3">
            <label className="flex items-center gap-[5px] w-[244px]">
              <input type="checkbox" className="appearance-none w-[13px] h-[13px] border border-[#8e8f8f] bg-linear-to-br from-[#c8ccd0] to-white shadow-[inset_0_0_0_2px_#f4f4f4]" />
              Estimate missing parameters by UNIFAC
            </label>
            <PushButton className="w-[75px]">Search</PushButton>
            <PushButton className="w-[75px] ml-[13px]">Swap</PushButton>
          </div>
        </div>
      </div>
    </div>
  </main>
);

const ZoomSign = ({ plus = false }: { plus?: boolean }) => (
  <svg width="15" height="15" viewBox="0 0 15 15" fill="none" stroke="#5a6676" aria-hidden="true">
    <circle cx="7.500" cy="7.500" r="6.500" strokeWidth="1.300" />
    <path d={plus ? 'M4 7.500h7M7.500 4v7' : 'M4 7.500h7'} strokeWidth="2" />
  </svg>
);

const StatusBar = () => (
  <footer className="flex items-center h-[30px] shrink-0 pl-[3px] pr-1 border-t-2 border-[#8496b4] bg-linear-to-b from-[#dfe9f5] to-[#aec0d8] text-xs">
    <span className="w-[156px] text-center leading-[17px] bg-[#ff2a2a] whitespace-nowrap">Required Input Incomplete</span>
    <PushButton className="w-[100px] ml-[6px]">Check Status</PushButton>
    <span className="ml-auto text-[#5a6676]">100%</span>
    <button aria-label="Zoom out" className="ml-[17px]"><ZoomSign /></button>
    <input
      type="range"
      aria-label="Zoom"
      defaultValue={50}
      className="appearance-none w-[120px] h-[18px] mx-[5px] mb-[6px] bg-transparent [&::-webkit-slider-runnable-track]:h-[3px] [&::-webkit-slider-runnable-track]:bg-[#f0f2f5] [&::-webkit-slider-runnable-track]:border-t [&::-webkit-slider-runnable-track]:border-[#b4bcc8] [&::-webkit-slider-thumb]:appearance-none [&::-webkit-slider-thumb]:w-[10px] [&::-webkit-slider-thumb]:h-[17px] [&::-webkit-slider-thumb]:-mt-2 [&::-webkit-slider-thumb]:border [&::-webkit-slider-thumb]:border-[#777] [&::-webkit-slider-thumb]:rounded-b-[5px] [&::-webkit-slider-thumb]:bg-[#f2f2f2]"
    />
    <button aria-label="Zoom in"><ZoomSign plus /></button>
  </footer>
);

interface TaskProps {
  name: string;
  open?: boolean;
  active?: boolean;
  children: React.ReactNode;
}

const Task: React.FC<TaskProps> = ({ name, open, active, children }) => (
  <button aria-label={name} className={`relative flex items-center justify-center w-[49px] h-10 ${active ? 'bg-[#5b6463]' : ''}`}>
    <svg width="24" height="24" viewBox="0 0 24 24" aria-hidden="true">{children}</svg>
    {open && <span className={`absolute bottom-0 h-[2px] bg-[#76b9ed] ${active ? 'inset-x-0' : 'inset-x-1'}`} />}
  </button>
);

const Office = ({ letter, color }: { letter: string; color: string }) => (
  <>
    <path d="M12 4h11v16H12z" fill="#fff" stroke={color} />
    <path d="M14 7h7m-7 3h7m-7 3h7m-7 3h7" stroke={color} strokeWidth="1.500" />
    <path d="m1 3 13-2v22L1 21z" fill={color} />
    <text x="7.500" y="16" textAnchor="middle" fontSize="11" fontWeight="700" fontFamily="Open Sans, sans-serif" fill="#fff">{letter}</text>
  </>
);

const Taskbar = () => (
  <div className="flex h-10 shrink-0 bg-[#343d3e] text-white">
    <button aria-label="Start" className="flex items-center justify-center w-12 bg-[#3d2628]">
      <svg width="16" height="16" viewBox="0 0 16 16" fill="#fff" aria-hidden="true"><path d="M0 2.500 7 1.500v6H0zM8 1.300 16 0v7.500H8zM0 8.500h7v6l-7-1zM8 8.500h8V16l-8-1.300z" /></svg>
    </button>
    <label className="flex items-center gap-[10px] w-[344px] pl-3 border border-[#c4c4c4] bg-[#f1f1f1]">
      <svg width="17" height="17" viewBox="0 0 17 17" fill="none" stroke="#111" strokeWidth="1.300" aria-hidden="true"><circle cx="10.500" cy="6" r="5" /><path d="m7 10-6 6.500" /></svg>
      <input aria-label="Search Windows" placeholder="在这里输入你要搜索的内容" className="w-60 text-[14px] text-[#222] placeholder:text-[#333] font-['Noto_Sans_CJK_SC',sans-serif] outline-none" />
    </label>
    <Task name="Cortana"><circle cx="12" cy="12" r="7" fill="none" stroke="#fff" strokeWidth="2.200" /></Task>
    <Task name="Task View"><path d="M4 4v3h10V4M4 20v-3h10v3M4 9h10v6H4zM18.500 4v3m0 5v8" fill="none" stroke="#fff" strokeWidth="1.200" /><path d="M17 8h3v3h-3z" fill="#fff" /></Task>
    <Task name="File Explorer" open>
      <path d="M1 3h8l1 2h13v16H1z" fill="#ffd565" /><path d="M1 3h8l1 2-1 1H1z" fill="#e4a21a" /><path d="M5 21v-8h14v8h-4v-4h-6v4z" fill="#3f9bdc" />
    </Task>
    <Task name="Edge">
      <path d="M2 11C3 4 8 1 12.500 1 19 1 22 6 22 11v2.500H9c.500 5 7 6 11.500 3v4.200c-6 3.500-16 2-16-6.700 0-3.500 2-6 4.500-7-3 1-5.500 2-7 4zm7-.500h7.500C16 4.500 9.500 5.500 9 10.500z" fill="#0a7bd8" />
    </Task>
    <Task name="QQ Browser" open>
      <circle cx="12" cy="11.500" r="9" fill="none" stroke="#1f9cf5" strokeWidth="4.500" /><path d="M14 23c-4 0-4-5 0-5 1-5 7-5 8 0 3 0 3 5 0 5z" fill="#fff" />
    </Task>
    <Task name="Word" open><Office letter="W" color="#2b579a" /></Task>
    <Task name="Aspen Plus" open active>
      <circle cx="12" cy="12" r="11.500" fill="#5f93c6" /><path d="M.500.500H12L.500 12z" fill="#3c7cb8" /><circle cx="12" cy="12" r="9" fill="#c8d9ea" />
      <text x="3" y="18" fontSize="16" fontWeight="700" fontFamily="Open Sans, sans-serif" fill="#24518c">A</text><path d="M17 4v7m-3.500-3.500h7" stroke="#24518c" strokeWidth="2" />
    </Task>
    <Task name="Dictionary" open>
      <path d="M.500.500h23v23H.500z" fill="#c7c5f4" stroke="#3d7ad8" /><path d="m8 4 4-2v10H8z" fill="#c91e2d" /><path d="m12 4 4-2v9h-4z" fill="#27307a" /><path d="m16 3 5 1v11l-5-3z" fill="#c9209c" /><path d="m1 11 8 3 8-5 5 6-11 7-6-3z" fill="#fff" stroke="#222" strokeWidth=".7" /><path d="m2 13 6 8h4" stroke="#239a44" fill="none" strokeWidth="1.500" /><path d="m11 17 6-4m-4 6 6-4" stroke="#555" strokeDasharray="1 1" />
    </Task>
    <Task name="Phone" open>
      <circle cx="12" cy="12" r="12" fill="#1a7fd8" /><rect x="6" y="3.500" width="12" height="17" rx="1.500" fill="#fff" /><rect x="7.500" y="5.500" width="9" height="12" fill="#2d8fe2" /><circle cx="12" cy="19" r=".8" fill="#1a7fd8" />
    </Task>
    <Task name="Excel" open><Office letter="X" color="#217346" /></Task>
    <div className="flex items-center ml-auto shrink-0">
      <svg width="14" height="8" viewBox="0 0 14 8" aria-hidden="true"><path d="m1 7 6-5.500L13 7" fill="none" stroke="#fff" strokeWidth="1.400" /></svg>
      <svg className="ml-2" width="16" height="18" viewBox="0 0 16 18" aria-hidden="true">
        <ellipse cx="8" cy="9" rx="6.500" ry="7.500" fill="#050505" /><ellipse cx="8" cy="12" rx="4" ry="4.500" fill="#fff" /><circle cx="8" cy="4.500" r="4" fill="#050505" /><circle cx="6.500" cy="3.500" r="1" fill="#fff" /><circle cx="9.500" cy="3.500" r="1" fill="#fff" /><path d="M5.500 6h5L8 7.500zM2 16h5v2H2zm7 0h5v2H9z" fill="#f2a31b" /><path d="M2.500 8c3 2 8 2 11 0v2.500c-2 1-4 1.500-6 1.500l-.500 2H5v-2.500l-2.500-1z" fill="#e01a22" />
      </svg>
      <svg className="ml-3" width="14" height="14" viewBox="0 0 14 14" fill="none" stroke="#cfd3d3" aria-hidden="true"><path d="M1 12C1 6 6 1 12 1M4 13c0-5 4-9 8-9M7 13c0-3 2-6 5-6M10 13c0-2 1-3 2.500-3" strokeWidth="1.300" /></svg>
      <svg className="ml-2" width="24" height="14" viewBox="0 0 24 14" fill="none" stroke="#fff" aria-hidden="true"><rect x=".500" y=".500" width="22" height="12" rx="1" /><path d="M3 3.500h17M3 6.500h17" strokeDasharray="2 1" /><path d="M6 9.500h11" /></svg>
      <button className="w-4 ml-2 text-[15px] leading-4 font-['Noto_Sans_CJK_SC',sans-serif]">中</button>
      <button className="w-[15px] h-[15px] ml-[14px] text-[13px] leading-[15px] bg-white text-black font-['Noto_Sans_CJK_SC',sans-serif]">拼</button>
      <time className="w-[92px] text-center text-xs leading-[19px]">11:31<br />2020/5/15</time>
      <button aria-label="1 notification" className="ml-1">
        <svg width="26" height="26" viewBox="0 0 26 26" aria-hidden="true">
          <path d="M1 2h16v12H9l-3 4v-4H1z" fill="#fff" /><path d="M4 5h10M4 8h10M4 11h7" stroke="#343d3e" />
          <circle cx="17" cy="17" r="7.500" fill="#343d3e" stroke="#9aa0a0" />
          <text x="14" y="21" fontSize="11" fontWeight="700" fontFamily="Open Sans, sans-serif" fill="#fff">1</text>
        </svg>
      </button>
      <span className="w-px h-10 ml-2 mr-1 bg-[#8b9191]" />
    </div>
  </div>
);

const App: React.FC = () => (
  <div className="flex flex-col h-screen overflow-hidden text-[11px] text-black font-['Open_Sans','Noto_Sans_CJK_SC',sans-serif]">
    <Header />
    <div className="flex flex-1 min-h-0 bg-[#c2d5ea]">
      <Sidebar />
      <Editor />
    </div>
    <StatusBar />
    <Taskbar />
  </div>
);

export default App;
